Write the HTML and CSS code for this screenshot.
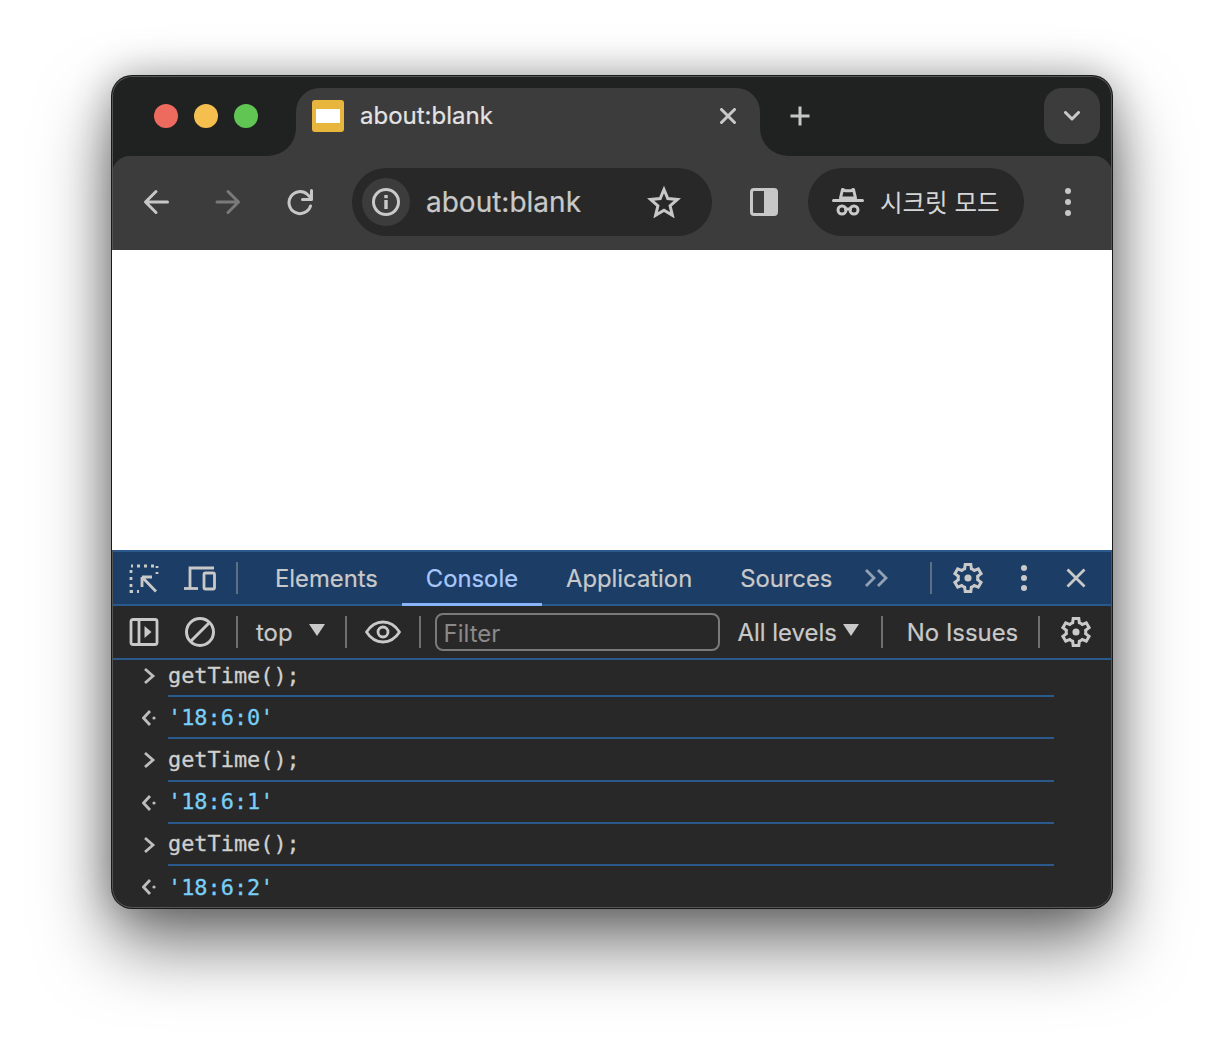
FILE: index.html
```html
<!DOCTYPE html>
<html lang="ko">
<head>
<meta charset="utf-8">
<title>about:blank</title>
<link rel="stylesheet" href="styles.css">
</head>
<body>
<main class="window">
  <header class="titlebar">
    <div class="lights">
      <span class="light red"></span><span class="light yellow"></span><span class="light green"></span>
    </div>
    <div class="tab">
      <span class="favicon"><span class="favicon-page"></span></span>
      <span class="tab-title">about:blank</span>
      <svg class="tab-close" width="16" height="16" viewBox="0 0 16 16"><path d="M1.500 1.500 14.500 14.500M14.500 1.500 1.500 14.500" class="st light-2"/></svg>
    </div>
    <div class="tab-rest">
      <svg class="new-tab" width="22" height="22" viewBox="0 0 22 22"><path d="M11 1.500V20.500M1.500 11H20.500" class="st light-1 butt"/></svg>
      <span class="tab-menu"><svg width="16" height="10" viewBox="0 0 16 10"><path d="M1.500 1.500 8 8 14.500 1.500" class="st light-2"/></svg></span>
    </div>
  </header>
  <nav class="toolbar">
    <span class="tool"><svg width="28" height="28" viewBox="0 0 28 28"><path d="M25.500 14H4M14 3.500 3.500 14 14 24.500" class="st light-1"/></svg></span>
    <span class="tool"><svg width="28" height="28" viewBox="0 0 28 28"><path d="M3 14H24M14 3.500 24.500 14 14 24.500" class="st dim"/></svg></span>
    <span class="tool"><svg width="28" height="28" viewBox="0 0 28 28"><path d="M24.500 18A11 11 0 1 1 21.500 6.500L25 10" class="st light-1"/><path d="M25.500 2.500V11.500H16.500" class="st light-1"/></svg></span>
    <div class="omnibox">
      <span class="info"><svg width="30" height="30" viewBox="0 0 30 30"><circle cx="15" cy="15" r="12.500" class="st light-2"/><rect x="13.300" y="13" width="3.400" height="9" class="fill-2"/><rect x="13.300" y="8" width="3.400" height="3.200" class="fill-2"/></svg></span>
      <span class="url">about:blank</span>
      <svg class="star" width="34" height="32" viewBox="0 0 34 32"><path d="M17 3.500 20.800 12.600 30.500 13.400 23.100 19.800 25.400 29.300 17 24.200 8.600 29.300 10.900 19.800 3.500 13.400 13.200 12.600Z" class="st light-1 miter"/></svg>
    </div>
    <span class="side-panel"><span class="side-fill"></span></span>
    <div class="incognito">
      <svg width="32" height="30" viewBox="0 0 32 30"><path d="M8.500 11 10.500 2.500 13.500 3.800H18.500L21.500 2.500 23.500 11Z" class="st light-2 thin"/><path d="M1.500 13.500H30.500" class="st light-2"/><circle cx="10" cy="23" r="4" class="st light-2"/><circle cx="22" cy="23" r="4" class="st light-2"/><path d="M13.500 22H18.500" class="st light-2"/></svg>
      <span class="incognito-label">시크릿 모드</span>
    </div>
    <span class="menu-dots"><i></i><i></i><i></i></span>
  </nav>
  <section class="page"></section>
  <section class="devtools">
    <div class="dt-tabs">
      <svg class="ic-inspect" width="30" height="30" viewBox="0 0 30 30"><path d="M2 3H4M8 3H11M15 3H18M22 3H25M28 3V5M28 9V11M2 7V10M2 14V17M2 21V24M2 27V28.500H4M8 28.500H10" class="st-2 light-2 butt"/><path d="M13 14 27 28.500M13 14H23M13 14V24" class="st-2 light-2 butt"/></svg>
      <svg class="ic-device" width="34" height="26" viewBox="0 0 34 26"><path d="M31 3H7V23" class="st-2 light-2 butt"/><path d="M1 23.500H15" class="st-2 light-2 butt"/><rect x="21" y="8" width="10.500" height="16" rx="1.500" class="st-2 light-2"/></svg>
      <span class="sep sep-tab"></span>
      <span class="dt-tab">Elements</span>
      <span class="dt-tab active">Console</span>
      <span class="dt-tab">Application</span>
      <span class="dt-tab">Sources</span>
      <svg class="ic-more" width="26" height="20" viewBox="0 0 26 20"><path d="M2 2 10 10 2 18M14 2 22 10 14 18" class="st-2 dim-2 butt"/></svg>
      <span class="sep sep-right"></span>
      <svg class="ic-gear first" width="36" height="36" viewBox="0 -960 960 960"><path d="M370-80l-16-128q-13-5-24.500-12T307-235l-119 50L78-375l103-78q-1-7-1-13.500v-27q0-6.500 1-13.500L78-585l110-190 119 50q11-8 23-15t24-12l16-128h220l16 128q13 5 24.500 12t22.500 15l119-50 110 190-103 78q1 7 1 13.500v27q0 6.500-2 13.500l103 78-110 190-118-50q-11 8-23 15t-24 12L590-80H370Zm70-80h79l14-106q31-8 57.500-23.500T639-327l99 41 39-68-86-65q5-14 7-29.500t2-31.500q0-16-2-31.500t-7-29.500l86-65-39-68-99 42q-22-23-48.500-38.500T533-694l-13-106h-79l-14 106q-31 8-57.500 23.500T321-633l-99-41-39 68 86 64q-5 15-7 30t-2 32q0 16 2 31t7 30l-86 65 39 68 99-42q22 23 48.500 38.500T427-266l13 106Z" class="fill-2"/><circle cx="480" cy="-480" r="95" class="fill-2"/></svg>
      <span class="dt-dots"><i></i><i></i><i></i></span>
      <svg class="ic-close" width="20" height="20" viewBox="0 0 20 20"><path d="M1.500 1.500 18.500 18.500M18.500 1.500 1.500 18.500" class="st-2 light-2 butt"/></svg>
    </div>
    <div class="dt-console-bar">
      <svg class="ic-sidebar" width="30" height="30" viewBox="0 0 30 30"><rect x="2" y="2.500" width="26" height="25" rx="2" class="st-2 light-2"/><path d="M10 3V27" class="st-2 light-2 butt"/><path d="M15.500 9 22.500 15 15.500 21Z" class="fill-2"/></svg>
      <svg class="ic-block" width="32" height="32" viewBox="0 0 32 32"><circle cx="16" cy="16" r="13.500" class="st light-2"/><path d="M7 25 25 7" class="st light-2 butt"/></svg>
      <span class="sep sep-bar"></span>
      <span class="bar-text top">top</span>
      <span class="caret caret-top"></span>
      <span class="sep sep-ctx"></span>
      <svg class="ic-eye" width="36" height="26" viewBox="0 0 36 26"><path d="M1.500 13C6 6 11.500 3 18 3S30 6 34.500 13C30 20 24.500 23 18 23S6 20 1.500 13Z" class="st-2 light-2"/><circle cx="18" cy="13" r="5" class="st-2 light-2"/></svg>
      <span class="sep sep-eye"></span>
      <div class="filter">Filter</div>
      <span class="bar-text levels">All levels</span>
      <span class="caret caret-levels"></span>
      <span class="sep sep-levels"></span>
      <span class="bar-text issues">No Issues</span>
      <span class="sep sep-issues"></span>
      <svg class="ic-gear" width="36" height="36" viewBox="0 -960 960 960"><path d="M370-80l-16-128q-13-5-24.500-12T307-235l-119 50L78-375l103-78q-1-7-1-13.500v-27q0-6.500 1-13.500L78-585l110-190 119 50q11-8 23-15t24-12l16-128h220l16 128q13 5 24.500 12t22.500 15l119-50 110 190-103 78q1 7 1 13.500v27q0 6.500-2 13.500l103 78-110 190-118-50q-11 8-23 15t-24 12L590-80H370Zm70-80h79l14-106q31-8 57.500-23.500T639-327l99 41 39-68-86-65q5-14 7-29.500t2-31.500q0-16-2-31.500t-7-29.500l86-65-39-68-99 42q-22-23-48.500-38.500T533-694l-13-106h-79l-14 106q-31 8-57.500 23.500T321-633l-99-41-39 68 86 64q-5 15-7 30t-2 32q0 16 2 31t7 30l-86 65 39 68 99-42q22 23 48.500 38.500T427-266l13 106Z" class="fill-2"/><circle cx="480" cy="-480" r="95" class="fill-2"/></svg>
    </div>
    <div class="log">
      <div class="row first"><svg width="14" height="18" viewBox="0 0 14 18"><path d="M3 2 11 9 3 16" class="st-2 light-3 butt"/></svg><span class="code">getTime();</span></div>
      <div class="row"><svg width="14" height="18" viewBox="0 0 14 18"><path d="M8 2 1.500 9 8 16" class="st-2 light-3 butt"/><circle cx="12" cy="9" r="1.600" class="fill-3"/></svg><span class="code value">'18:6:0'</span></div>
      <div class="row"><svg width="14" height="18" viewBox="0 0 14 18"><path d="M3 2 11 9 3 16" class="st-2 light-3 butt"/></svg><span class="code">getTime();</span></div>
      <div class="row"><svg width="14" height="18" viewBox="0 0 14 18"><path d="M8 2 1.500 9 8 16" class="st-2 light-3 butt"/><circle cx="12" cy="9" r="1.600" class="fill-3"/></svg><span class="code value">'18:6:1'</span></div>
      <div class="row"><svg width="14" height="18" viewBox="0 0 14 18"><path d="M3 2 11 9 3 16" class="st-2 light-3 butt"/></svg><span class="code">getTime();</span></div>
      <div class="row last"><svg width="14" height="18" viewBox="0 0 14 18"><path d="M8 2 1.500 9 8 16" class="st-2 light-3 butt"/><circle cx="12" cy="9" r="1.600" class="fill-3"/></svg><span class="code value">'18:6:2'</span></div>
    </div>
  </section>
</main>
</body>
</html>
```
FILE: styles.css
```css
* { box-sizing: border-box; }
html, body { margin: 0; height: 100%; background: #fff; }
body { padding: 76px 112px 0; font-family: Inter, "Noto Sans CJK KR", sans-serif; overflow: hidden; }
svg { display: block; flex: none; }

.window {
  width: 1000px; height: 832px; display: flex; flex-direction: column;
  background: #202222; border-radius: 20px; overflow: hidden;
  box-shadow: 0 0 0 1px #1a1a1a, 0 36px 72px rgba(0,0,0,.55), 0 0 40px rgba(0,0,0,.3);
  position: relative;
}
.window::after {
  content: ""; position: absolute; inset: 0; border-radius: 20px; pointer-events: none;
  box-shadow: inset 0 0 0 1px #555;
}

.st { fill: none; stroke-width: 3; stroke-linecap: round; stroke-linejoin: round; }
.st-2 { fill: none; stroke-width: 2.800; stroke-linecap: round; stroke-linejoin: round; }
.butt { stroke-linecap: butt; stroke-linejoin: miter; }
.miter { stroke-linejoin: miter; }
.thin { stroke-width: 3; }
.light-1 { stroke: #c7c7c7; }
.light-2 { stroke: #c9c9c9; }
.light-3 { stroke: #bdbdbd; }
.dim { stroke: #7a7a7a; }
.dim-2 { stroke: #93a3b5; }
.fill-2 { fill: #c9c9c9; }
.fill-3 { fill: #bdbdbd; }

/* title bar */
.titlebar {
  flex: none; height: 80px; display: flex;
  background: linear-gradient(#202222 40px, #3c3c3c 40px);
}
.lights {
  width: 184px; display: flex; gap: 16px; padding: 28px 0 0 42px;
  background: #202222; border-bottom-right-radius: 28px;
}
.light { width: 24px; height: 24px; border-radius: 50%; }
.red { background: #ed6a5f; }
.yellow { background: #f4bf4f; }
.green { background: #61c554; }
.tab {
  width: 464px; margin-top: 12px; display: flex; align-items: flex-start; padding: 12px 24px 0 16px;
  background: #3c3c3c; border-radius: 24px 24px 0 0;
}
.favicon {
  width: 32px; height: 32px; flex: none; padding: 9px 4px; border-radius: 3px; background: #e8b63c;
}
.favicon-page { display: block; height: 14px; background: #fff; }
.tab-title { margin-left: 16px; font-size: 24px; line-height: 32px; color: #e3e3e3; flex: 1; -webkit-text-stroke: .2px; }
.tab-close { margin-top: 8px; }
.tab-rest {
  flex: 1; display: flex; align-items: flex-start; justify-content: space-between;
  padding: 12px 12px 0 29px; background: #202222; border-bottom-left-radius: 28px;
}
.new-tab { margin-top: 17px; }
.tab-menu {
  width: 56px; height: 56px; display: flex; align-items: center; justify-content: center;
  background: #3c3c3c; border-radius: 18px;
}

/* toolbar */
.toolbar {
  flex: none; height: 94px; display: flex; align-items: center; padding: 0 0 2px 8px;
  background: #3c3c3c; border-radius: 18px 18px 0 0;
}
.tool { width: 72px; height: 68px; display: flex; align-items: center; justify-content: center; }
.omnibox {
  width: 360px; height: 68px; margin-left: 16px; display: flex; align-items: center;
  padding: 0 31px 0 10px; background: #282828; border-radius: 34px;
}
.info {
  width: 48px; height: 48px; display: flex; align-items: center; justify-content: center;
  background: #3c3c3c; border-radius: 50%;
}
.url { margin-left: 16px; flex: 1; font-size: 28px; color: #c9c9c9; -webkit-text-stroke: .2px; }
.side-panel {
  width: 28px; height: 28px; margin-left: 38px; display: flex; justify-content: flex-end;
  border: 3px solid #c7c7c7; border-radius: 4px;
}
.side-fill { width: 11px; background: #c7c7c7; }
.incognito {
  width: 216px; height: 68px; margin-left: 30px; display: flex; align-items: center;
  padding-left: 24px; background: #282828; border-radius: 34px; color: #d6d6d6;
}
.incognito-label { margin-left: 16px; font-family: "Noto Sans CJK KR", sans-serif; font-size: 24.500px; margin-top: -2px; }
.menu-dots { margin-left: 41px; display: flex; flex-direction: column; gap: 5px; }
.menu-dots i { display: block; width: 6px; height: 6px; border-radius: 50%; background: #c7c7c7; }

/* page */
.page { flex: none; height: 300px; background: #fff; position: relative; z-index: 1; }

/* devtools */
.devtools { flex: 1; min-height: 0; display: flex; flex-direction: column; background: #282828; }
.dt-tabs {
  flex: none; height: 56px; display: flex; align-items: center; padding-left: 17px;
  background: #1b3d66; border-top: 2px solid #2a5a8c; border-bottom: 2px solid #2a5a8c;
}
.sep { flex: none; width: 2px; height: 32px; background: #6f6f6f; }
.ic-device { margin-left: 24px; }
.sep-tab { margin-left: 19px; margin-right: 13px; background: #5e6f84; }
.dt-tab {
  height: 54px; padding: 2px 24px 0; margin-bottom: -2px; display: flex; align-items: center;
  font-size: 23.800px; color: #c9c9c9; border-bottom: 3px solid transparent; -webkit-text-stroke: .2px;
}
.dt-tab.active { color: #a8c7fa; border-bottom-color: #8ab4f8; }
.ic-more { margin-left: 8px; }
.sep-right { margin-left: 40px; margin-right: 18px; background: #5e6f84; }
.dt-dots { margin-left: 35px; display: flex; flex-direction: column; gap: 4px; }
.dt-dots i { display: block; width: 6px; height: 6px; border-radius: 50%; background: #c9c9c9; }
.ic-close { margin-left: 39px; }

.dt-console-bar {
  flex: none; height: 54px; display: flex; align-items: center; padding-left: 17px;
  border-bottom: 2px solid #2a5a8c;
}
.ic-block { margin-left: 25px; }
.sep-bar { margin-left: 20px; }
.bar-text { font-size: 23.900px; color: #c9c9c9; -webkit-text-stroke: .2px; }
.top { margin-left: 18px; }
.caret {
  width: 0; height: 0; border-left: 8px solid transparent; border-right: 8px solid transparent;
  border-top: 12px solid #c9c9c9;
}
.caret-top { margin-left: 16px; margin-top: -4px; }
.sep-ctx { margin-left: 20px; }
.ic-eye { margin-left: 18px; }
.sep-eye { margin-left: 18px; }
.filter {
  width: 285px; height: 38px; margin-left: 14px; padding: 2px 0 0 7px; display: flex; align-items: center;
  font-size: 24px; color: #8a8a8a; border: 2px solid #7a7a7a; border-radius: 8px;
}
.levels { margin-left: 18px; }
.caret-levels { margin-left: 6px; margin-top: -4px; }
.sep-levels { margin-left: 22px; }
.issues { margin-left: 24px; }
.sep-issues { margin-left: 20px; }
.dt-console-bar .ic-gear { margin-left: 18px; }
.ic-gear.first { margin-left: 0; }

.log { flex: 1; min-height: 0; overflow: hidden; padding-left: 30px; }
.row { height: 42.250px; display: flex; align-items: center; }
.row.first { height: 37px; }
.row.first svg { margin-bottom: 6px; }
.row.first .code { padding-bottom: 4px; }
.code {
  flex: none; width: 886px; height: 100%; margin-left: 12px; display: flex; align-items: center;
  font-family: "DejaVu Sans Mono", monospace; font-size: 21.900px; color: #cfcfcf;
  border-bottom: 2px solid #2a5a8c; -webkit-text-stroke: .3px;
}
.row.last .code { border-bottom: 0; }
.code.value { color: #78cff8; }
```
